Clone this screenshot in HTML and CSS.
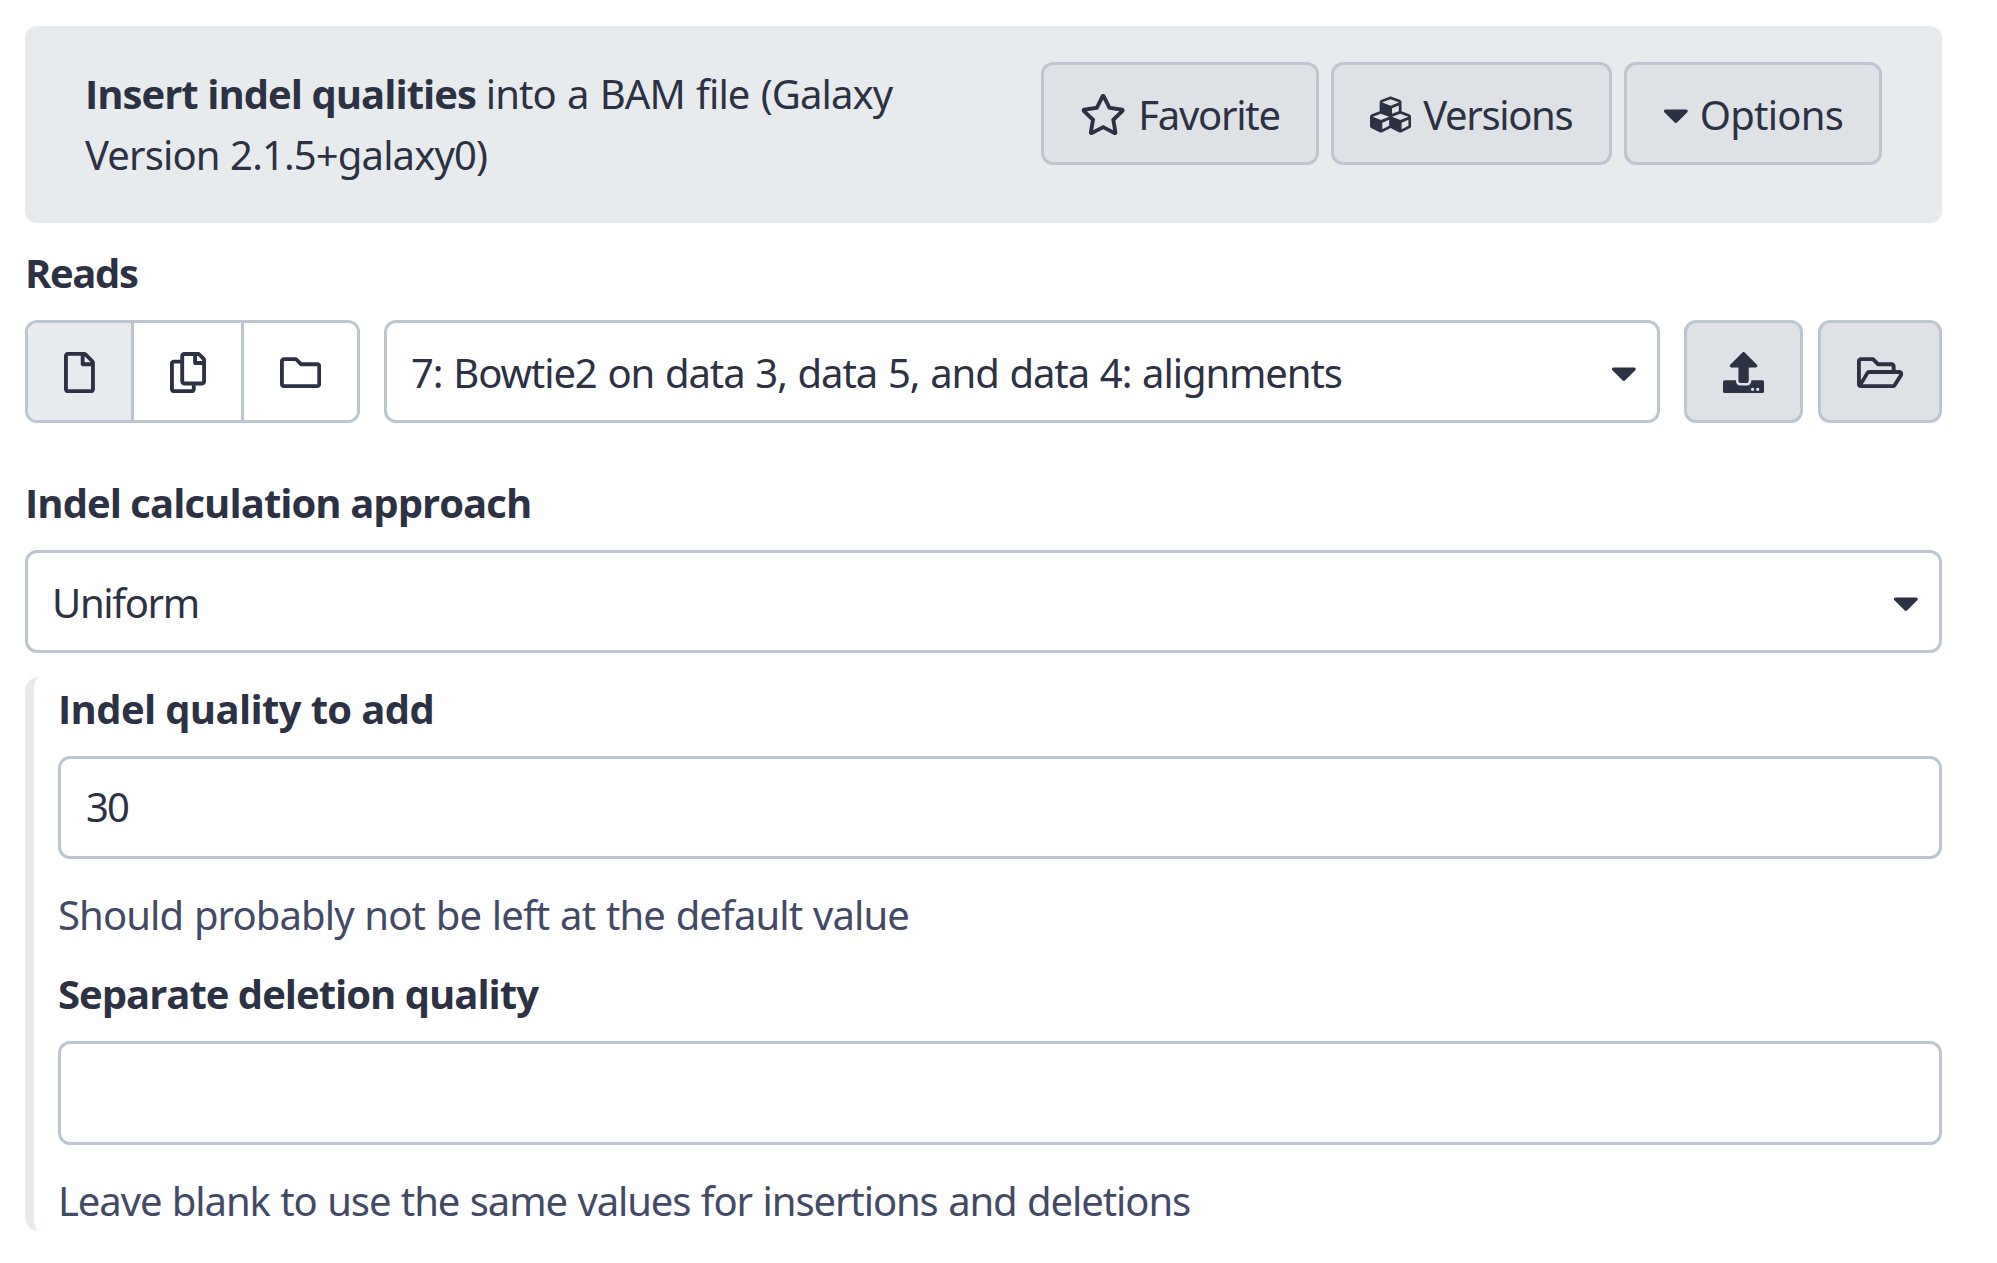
FILE: index.html
```html
<!DOCTYPE html>
<html lang="en">
<head>
<meta charset="utf-8">
<title>Insert indel qualities</title>
<link rel="stylesheet" href="styles.css">
</head>
<body>
<svg class="sprite" aria-hidden="true">
  <symbol id="caret" viewBox="0 0 320 512"><path d="M31.3 192h257.3c17.8 0 26.7 21.5 14.1 34.1L174.1 354.8c-7.8 7.8-20.5 7.8-28.3 0L17.2 226.1C4.6 213.5 13.5 192 31.3 192z"/></symbol>
</svg>
<main class="tool">
  <header class="tool-header">
    <h1 class="title"><b>Insert indel qualities</b> <span class="title-a">into a BAM file (Galaxy</span> <span class="title-b">Version 2.1.5+galaxy0)</span></h1>
    <div class="actions">
      <button class="btn favorite"><svg class="icon w576" viewBox="0 0 576 512"><path d="M528.1 171.5L382 150.2 316.7 17.8c-11.7-23.6-45.6-23.9-57.4 0L194 150.2 47.9 171.5c-26.2 3.8-36.7 36.1-17.7 54.6l105.7 103-25 145.5c-4.5 26.3 23.2 46 46.4 33.7L288 439.6l130.7 68.7c23.2 12.2 50.9-7.4 46.4-33.7l-25-145.5 105.7-103c19-18.5 8.5-50.8-17.7-54.6zM388.6 312.3l23.7 138.4L288 385.4l-124.3 65.3 23.7-138.4-100.6-98 139-20.2 62.2-126 62.2 126 139 20.2-100.6 98z"/></svg><span>Favorite</span></button>
      <button class="btn versions"><svg class="icon w512" viewBox="0 0 512 512"><path d="M488.6 250.2L392 214V105.5c0-15-9.3-28.4-23.4-33.7l-100-37.5c-8.1-3.1-17.1-3.1-25.3 0l-100 37.5c-14.1 5.3-23.4 18.7-23.4 33.7V214l-96.6 36.2C9.3 255.5 0 268.9 0 283.9V394c0 13.6 7.7 26.1 19.9 32.2l100 50c10.1 5.1 22.1 5.1 32.2 0l103.9-52 103.9 52c10.1 5.1 22.1 5.1 32.2 0l100-50c12.2-6.1 19.9-18.6 19.9-32.2V283.9c0-15-9.3-28.4-23.4-33.7zM358 214.8l-85 31.9v-68.2l85-37v73.3zM154 104.1l102-38.2 102 38.2v.6l-102 41.4-102-41.4v-.6zm84 291.1l-85 42.5v-79.1l85-38.8v75.4zm0-112l-102 41.4-102-41.4v-.6l102-38.2 102 38.2v.6zm240 112l-85 42.5v-79.1l85-38.8v75.4zm0-112l-102 41.4-102-41.4v-.6l102-38.2 102 38.2v.6z"/></svg><span>Versions</span></button>
      <button class="btn options"><svg class="icon w320"><use href="#caret"/></svg><span>Options</span></button>
    </div>
  </header>

  <section class="field">
    <h2 class="label reads">Reads</h2>
    <div class="row">
      <div class="group">
        <button class="seg one active"><svg class="icon w384" viewBox="0 0 384 512"><path d="M369.9 97.9L286 14C277 5 264.8-.1 252.1-.1H48C21.5 0 0 21.5 0 48v416c0 26.5 21.5 48 48 48h288c26.5 0 48-21.5 48-48V131.9c0-12.7-5.1-25-14.1-34zM332.1 128H256V51.9l76.1 76.1zM48 464V48h160v104c0 13.3 10.7 24 24 24h104v288H48z"/></svg></button>
        <button class="seg two"><svg class="icon w448" viewBox="0 0 448 512"><path d="M433.941 65.941l-51.882-51.882A48 48 0 0 0 348.118 0H176c-26.51 0-48 21.49-48 48v48H48c-26.51 0-48 21.49-48 48v320c0 26.51 21.49 48 48 48h224c26.51 0 48-21.49 48-48v-48h80c26.51 0 48-21.49 48-48V99.882a48 48 0 0 0-14.059-33.941zM266 464H54a6 6 0 0 1-6-6V150a6 6 0 0 1 6-6h74v224c0 26.51 21.49 48 48 48h96v42a6 6 0 0 1-6 6zm128-96H182a6 6 0 0 1-6-6V54a6 6 0 0 1 6-6h106v88c0 13.255 10.745 24 24 24h88v202a6 6 0 0 1-6 6zm6-256h-64V48h9.632c1.591 0 3.117.632 4.243 1.757l48.368 48.368a6 6 0 0 1 1.757 4.243V112z"/></svg></button>
        <button class="seg three"><svg class="icon w512" viewBox="0 0 512 512"><path d="M464 128H272l-54.63-54.63c-6-6-14.14-9.37-22.63-9.37H48C21.49 64 0 85.49 0 112v288c0 26.51 21.49 48 48 48h416c26.51 0 48-21.49 48-48V176c0-26.51-21.49-48-48-48zm0 272H48V112h140.12l54.63 54.63c6 6 14.14 9.37 22.63 9.37H464v224z"/></svg></button>
      </div>
      <div class="control select dataset"><span>7: Bowtie2 on data 3, data 5, and data 4: alignments</span><svg class="icon w320"><use href="#caret"/></svg></div>
      <div class="row-actions">
        <button class="btn upload"><svg class="icon w512" viewBox="0 0 512 512"><path d="M296 384h-80c-13.3 0-24-10.7-24-24V192h-87.7c-17.8 0-26.7-21.5-14.1-34.1L242.3 5.7c7.5-7.5 19.8-7.5 27.3 0l152.2 152.2c12.6 12.6 3.7 34.1-14.1 34.1H320v168c0 13.3-10.7 24-24 24zm216-8v112c0 13.3-10.7 24-24 24H24c-13.3 0-24-10.7-24-24V376c0-13.3 10.7-24 24-24h136v8c0 30.9 25.1 56 56 56h80c30.9 0 56-25.1 56-56v-8h136c13.3 0 24 10.7 24 24zm-124 88c0-11-9-20-20-20s-20 9-20 20 9 20 20 20 20-9 20-20zm64 0c0-11-9-20-20-20s-20 9-20 20 9 20 20 20 20-9 20-20z"/></svg></button>
        <button class="btn browse"><svg class="icon w576" viewBox="0 0 576 512"><path d="M527.9 224H480v-48c0-26.5-21.5-48-48-48H272l-64-64H48C21.5 64 0 85.5 0 112v288c0 26.5 21.5 48 48 48h400c16.5 0 31.9-8.5 40.7-22.6l79.9-128c20-31.9-3-73.4-40.7-73.4zM48 118c0-3.3 2.7-6 6-6h134.1l64 64H426c3.3 0 6 2.7 6 6v42H152c-16.8 0-32.4 8.8-41.1 23.2L48 351.4zm400 282H72l77.2-128H528z"/></svg></button>
      </div>
    </div>
  </section>

  <section class="field approach">
    <h2 class="label">Indel calculation approach</h2>
    <div class="control select uniform"><span>Uniform</span><svg class="icon w320"><use href="#caret"/></svg></div>
  </section>

  <div class="nested">
    <section class="field">
      <h2 class="label quality">Indel quality to add</h2>
      <div class="control number"><span>30</span></div>
      <p class="help first">Should probably not be left at the default value</p>
    </section>
    <section class="field">
      <h2 class="label deletion">Separate deletion quality</h2>
      <div class="control number empty"></div>
      <p class="help">Leave blank to use the same values for insertions and deletions</p>
    </section>
  </div>
</main>
</body>
</html>
```

FILE: styles.css
```css
* { box-sizing: border-box; }
body {
  margin: 0;
  background: #fff;
  color: #2c3143;
  font: 400 40px/61.5px "Noto Sans", sans-serif;
}
h1, h2, p { margin: 0; font-size: inherit; font-weight: 400; }
button { font: inherit; color: inherit; margin: 0; }
.sprite { display: none; }
.icon { display: block; flex: none; height: 41.2px; fill: #2c3143; }
.w320 { width: 25.7px; }
.w384 { width: 30.9px; }
.w448 { width: 36px; }
.w512 { width: 41.2px; }
.w576 { width: 46.3px; }

.tool { padding: 26px 55px 0 25px; }

.tool-header {
  display: flex;
  justify-content: space-between;
  height: 197px;
  padding: 36px 60px 0;
  border-radius: 12px;
  background: #e8ebee;
}
.title { width: 860px; padding-top: 1px; line-height: 61px; letter-spacing: -0.6px; }
.title b, .label { font-family: "Open Sans", sans-serif; font-weight: 700; }
.title b { letter-spacing: -0.97px; }
.title-a { letter-spacing: -0.9px; word-spacing: 1.7px; }
.title-b { display: block; letter-spacing: -0.87px; word-spacing: 1px; }
.actions { display: flex; gap: 12px; }

.btn {
  display: flex;
  align-items: center;
  justify-content: center;
  height: 103px;
  padding: 0;
  border: 3px solid #bdc5d1;
  border-radius: 12px;
  background: #dee1e6;
}
.btn .icon { margin-top: 2px; }
.actions .btn { justify-content: flex-start; gap: 12px; padding-left: 36px; }
.actions span { padding-top: 2px; }
.favorite { width: 278px; letter-spacing: -1.25px; }
.versions { width: 281px; letter-spacing: -1.34px; }
.options { width: 258px; letter-spacing: -0.75px; }
.actions .options { gap: 11px; }

.label { height: 61.5px; margin-bottom: 17px; letter-spacing: -0.95px; }
.reads { margin-top: 18.5px; letter-spacing: -1.4px; }
.quality { padding-top: 1px; letter-spacing: -0.65px; }
.deletion { padding-top: 1px; letter-spacing: -1px; }

.row { display: flex; height: 103px; }
.group {
  display: flex;
  width: 335px;
  margin-right: 24px;
  border: 3px solid #bdc5d1;
  border-radius: 12px;
  overflow: hidden;
}
.seg {
  display: flex;
  align-items: center;
  justify-content: center;
  padding: 2px 0 0;
  border: 0;
  background: #fff;
}
.seg + .seg { border-left: 3px solid #bdc5d1; }
.one { width: 103px; }
.two { width: 110px; }
.three { flex: 1; }
.active { background: #e8ebee; }

.control {
  display: flex;
  align-items: center;
  height: 103px;
  border: 3px solid #bdc5d1;
  border-radius: 12px;
  background: #fff;
}
.select { justify-content: space-between; padding: 0 20px 0 24px; }
.select .icon { margin-top: 3px; }
.select span { padding-top: 2px; }
.dataset { flex: 1; letter-spacing: -1.09px; word-spacing: 1.5px; }
.uniform { letter-spacing: -1.35px; }
.row-actions { display: flex; gap: 15px; margin-left: 24px; }
.upload { width: 119px; }
.browse { width: 124px; }

.approach { margin-top: 48.5px; }

.nested {
  margin-top: 24px;
  padding-left: 24px;
  border-left: 9px solid #e8ebee;
  border-radius: 14px;
}
.number { padding: 0 0 1px 25px; letter-spacing: -1.8px; }
.empty { height: 104px; margin-top: 17.5px; }
.help { margin-top: 25px; color: #434a65; letter-spacing: -1.1px; word-spacing: 1.2px; }
.first { margin-bottom: 16.5px; letter-spacing: -0.89px; word-spacing: 1.2px; }
```
